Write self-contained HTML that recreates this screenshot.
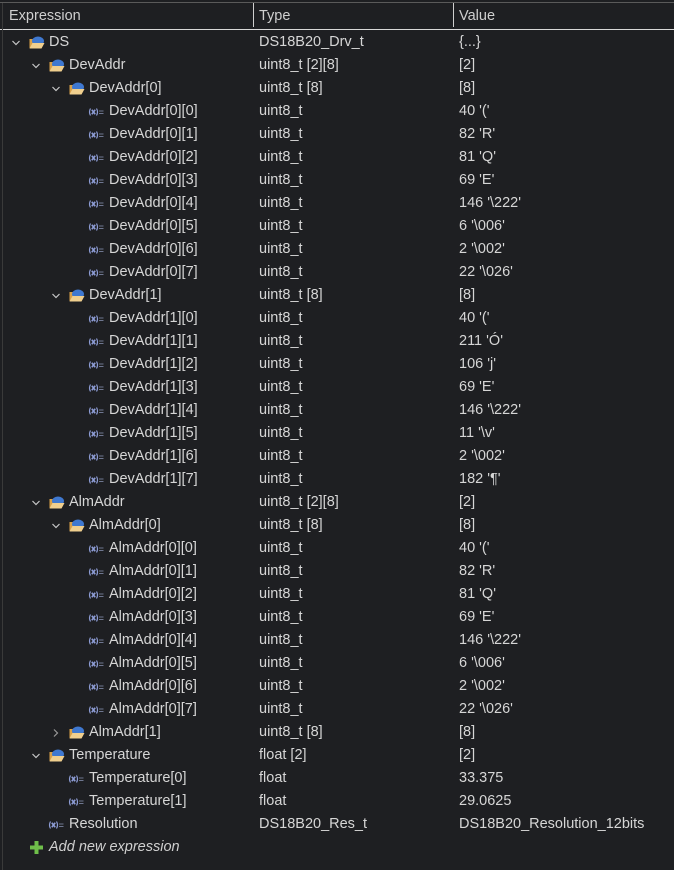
<!DOCTYPE html>
<html><head><meta charset="utf-8"><style>
body{margin:0;width:674px;height:870px;background:#1e1f22;overflow:hidden;font-family:"Liberation Sans",sans-serif;font-size:14.5px;color:#d6d6d6;position:relative}
.hdr{position:absolute;left:0;top:2px;width:674px;height:26px;border-top:1px solid #5a5a5a;border-bottom:1px solid #d8d8d8;background:#1e1f22}
.hdr span{position:absolute;top:5px;color:#cfcfcf}
.sep{position:absolute;top:3px;width:1px;height:24px;background:#cfcfcf}
.r{position:absolute;left:0;width:674px;height:23px;line-height:23px;white-space:nowrap}
.r b{font-weight:normal;position:absolute}
.t{left:259px}.v{left:459px}
.ar{position:absolute;width:10px;height:10px}
.ic{position:absolute;top:5px}
</style></head><body>
<div class="hdr"><span style="left:9px">Expression</span><span style="left:259px">Type</span><span style="left:459px">Value</span></div>
<div class="sep" style="left:253px"></div><div class="sep" style="left:453px"></div>
<div style="position:absolute;left:2px;top:3px;width:1px;height:867px;background:#3a3a3a"></div>
<svg width="0" height="0" style="position:absolute"><defs>
<symbol id="f" viewBox="0 0 16 13"><path d="M0.5 3h5l1 1h5v8h-11z" fill="#d9a048"/><ellipse cx="9" cy="5" rx="6" ry="4.5" fill="#3f78d0"/><path d="M0.5 12.5l3-5.5h12l-3 5.5z" fill="#f0cf8e"/></symbol>
<symbol id="l" viewBox="0 0 16 8"><g stroke="#8e9dd6" stroke-width="1.2" fill="none"><path d="M2.5 0.5q-2 3.5 0 7"/><path d="M8.5 0.5q2 3.5 0 7"/><path d="M3.8 1.8l3.4 4.4M7.2 1.8l-3.4 4.4" stroke-width="1.6"/><path d="M11 3h4.5M11 5.5h4.5" stroke="#6f7790" stroke-width="1"/></g></symbol>
<symbol id="d" viewBox="0 0 10 10"><path d="M1.5 3l3.5 3.5 3.5-3.5" stroke="#c8c8c8" stroke-width="1.2" fill="none"/></symbol>
<symbol id="c" viewBox="0 0 10 10"><path d="M3 1.5l3.5 3.5-3.5 3.5" stroke="#9a9a9a" stroke-width="1.2" fill="none"/></symbol>
</defs></svg>

<div class="r" style="top:31px"><svg class="ar" style="left:11px;top:7px"><use href="#d"/></svg><svg class="ic" style="left:29px" width="16" height="13"><use href="#f"/></svg><b style="left:49px">DS</b><b class="t">DS18B20_Drv_t</b><b class="v">{...}</b></div>
<div class="r" style="top:54px"><svg class="ar" style="left:31px;top:7px"><use href="#d"/></svg><svg class="ic" style="left:49px" width="16" height="13"><use href="#f"/></svg><b style="left:69px">DevAddr</b><b class="t">uint8_t [2][8]</b><b class="v">[2]</b></div>
<div class="r" style="top:77px"><svg class="ar" style="left:51px;top:7px"><use href="#d"/></svg><svg class="ic" style="left:69px" width="16" height="13"><use href="#f"/></svg><b style="left:89px">DevAddr[0]</b><b class="t">uint8_t [8]</b><b class="v">[8]</b></div>
<div class="r" style="top:100px"><svg class="ic" style="left:88px;top:8px" width="16" height="8"><use href="#l"/></svg><b style="left:109px">DevAddr[0][0]</b><b class="t">uint8_t</b><b class="v">40 '('</b></div>
<div class="r" style="top:123px"><svg class="ic" style="left:88px;top:8px" width="16" height="8"><use href="#l"/></svg><b style="left:109px">DevAddr[0][1]</b><b class="t">uint8_t</b><b class="v">82 'R'</b></div>
<div class="r" style="top:146px"><svg class="ic" style="left:88px;top:8px" width="16" height="8"><use href="#l"/></svg><b style="left:109px">DevAddr[0][2]</b><b class="t">uint8_t</b><b class="v">81 'Q'</b></div>
<div class="r" style="top:169px"><svg class="ic" style="left:88px;top:8px" width="16" height="8"><use href="#l"/></svg><b style="left:109px">DevAddr[0][3]</b><b class="t">uint8_t</b><b class="v">69 'E'</b></div>
<div class="r" style="top:192px"><svg class="ic" style="left:88px;top:8px" width="16" height="8"><use href="#l"/></svg><b style="left:109px">DevAddr[0][4]</b><b class="t">uint8_t</b><b class="v">146 '\222'</b></div>
<div class="r" style="top:215px"><svg class="ic" style="left:88px;top:8px" width="16" height="8"><use href="#l"/></svg><b style="left:109px">DevAddr[0][5]</b><b class="t">uint8_t</b><b class="v">6 '\006'</b></div>
<div class="r" style="top:238px"><svg class="ic" style="left:88px;top:8px" width="16" height="8"><use href="#l"/></svg><b style="left:109px">DevAddr[0][6]</b><b class="t">uint8_t</b><b class="v">2 '\002'</b></div>
<div class="r" style="top:261px"><svg class="ic" style="left:88px;top:8px" width="16" height="8"><use href="#l"/></svg><b style="left:109px">DevAddr[0][7]</b><b class="t">uint8_t</b><b class="v">22 '\026'</b></div>
<div class="r" style="top:284px"><svg class="ar" style="left:51px;top:7px"><use href="#d"/></svg><svg class="ic" style="left:69px" width="16" height="13"><use href="#f"/></svg><b style="left:89px">DevAddr[1]</b><b class="t">uint8_t [8]</b><b class="v">[8]</b></div>
<div class="r" style="top:307px"><svg class="ic" style="left:88px;top:8px" width="16" height="8"><use href="#l"/></svg><b style="left:109px">DevAddr[1][0]</b><b class="t">uint8_t</b><b class="v">40 '('</b></div>
<div class="r" style="top:330px"><svg class="ic" style="left:88px;top:8px" width="16" height="8"><use href="#l"/></svg><b style="left:109px">DevAddr[1][1]</b><b class="t">uint8_t</b><b class="v">211 'Ó'</b></div>
<div class="r" style="top:353px"><svg class="ic" style="left:88px;top:8px" width="16" height="8"><use href="#l"/></svg><b style="left:109px">DevAddr[1][2]</b><b class="t">uint8_t</b><b class="v">106 'j'</b></div>
<div class="r" style="top:376px"><svg class="ic" style="left:88px;top:8px" width="16" height="8"><use href="#l"/></svg><b style="left:109px">DevAddr[1][3]</b><b class="t">uint8_t</b><b class="v">69 'E'</b></div>
<div class="r" style="top:399px"><svg class="ic" style="left:88px;top:8px" width="16" height="8"><use href="#l"/></svg><b style="left:109px">DevAddr[1][4]</b><b class="t">uint8_t</b><b class="v">146 '\222'</b></div>
<div class="r" style="top:422px"><svg class="ic" style="left:88px;top:8px" width="16" height="8"><use href="#l"/></svg><b style="left:109px">DevAddr[1][5]</b><b class="t">uint8_t</b><b class="v">11 '\v'</b></div>
<div class="r" style="top:445px"><svg class="ic" style="left:88px;top:8px" width="16" height="8"><use href="#l"/></svg><b style="left:109px">DevAddr[1][6]</b><b class="t">uint8_t</b><b class="v">2 '\002'</b></div>
<div class="r" style="top:468px"><svg class="ic" style="left:88px;top:8px" width="16" height="8"><use href="#l"/></svg><b style="left:109px">DevAddr[1][7]</b><b class="t">uint8_t</b><b class="v">182 '¶'</b></div>
<div class="r" style="top:491px"><svg class="ar" style="left:31px;top:7px"><use href="#d"/></svg><svg class="ic" style="left:49px" width="16" height="13"><use href="#f"/></svg><b style="left:69px">AlmAddr</b><b class="t">uint8_t [2][8]</b><b class="v">[2]</b></div>
<div class="r" style="top:514px"><svg class="ar" style="left:51px;top:7px"><use href="#d"/></svg><svg class="ic" style="left:69px" width="16" height="13"><use href="#f"/></svg><b style="left:89px">AlmAddr[0]</b><b class="t">uint8_t [8]</b><b class="v">[8]</b></div>
<div class="r" style="top:537px"><svg class="ic" style="left:88px;top:8px" width="16" height="8"><use href="#l"/></svg><b style="left:109px">AlmAddr[0][0]</b><b class="t">uint8_t</b><b class="v">40 '('</b></div>
<div class="r" style="top:560px"><svg class="ic" style="left:88px;top:8px" width="16" height="8"><use href="#l"/></svg><b style="left:109px">AlmAddr[0][1]</b><b class="t">uint8_t</b><b class="v">82 'R'</b></div>
<div class="r" style="top:583px"><svg class="ic" style="left:88px;top:8px" width="16" height="8"><use href="#l"/></svg><b style="left:109px">AlmAddr[0][2]</b><b class="t">uint8_t</b><b class="v">81 'Q'</b></div>
<div class="r" style="top:606px"><svg class="ic" style="left:88px;top:8px" width="16" height="8"><use href="#l"/></svg><b style="left:109px">AlmAddr[0][3]</b><b class="t">uint8_t</b><b class="v">69 'E'</b></div>
<div class="r" style="top:629px"><svg class="ic" style="left:88px;top:8px" width="16" height="8"><use href="#l"/></svg><b style="left:109px">AlmAddr[0][4]</b><b class="t">uint8_t</b><b class="v">146 '\222'</b></div>
<div class="r" style="top:652px"><svg class="ic" style="left:88px;top:8px" width="16" height="8"><use href="#l"/></svg><b style="left:109px">AlmAddr[0][5]</b><b class="t">uint8_t</b><b class="v">6 '\006'</b></div>
<div class="r" style="top:675px"><svg class="ic" style="left:88px;top:8px" width="16" height="8"><use href="#l"/></svg><b style="left:109px">AlmAddr[0][6]</b><b class="t">uint8_t</b><b class="v">2 '\002'</b></div>
<div class="r" style="top:698px"><svg class="ic" style="left:88px;top:8px" width="16" height="8"><use href="#l"/></svg><b style="left:109px">AlmAddr[0][7]</b><b class="t">uint8_t</b><b class="v">22 '\026'</b></div>
<div class="r" style="top:721px"><svg class="ar" style="left:51px;top:7px"><use href="#c"/></svg><svg class="ic" style="left:69px" width="16" height="13"><use href="#f"/></svg><b style="left:89px">AlmAddr[1]</b><b class="t">uint8_t [8]</b><b class="v">[8]</b></div>
<div class="r" style="top:744px"><svg class="ar" style="left:31px;top:7px"><use href="#d"/></svg><svg class="ic" style="left:49px" width="16" height="13"><use href="#f"/></svg><b style="left:69px">Temperature</b><b class="t">float [2]</b><b class="v">[2]</b></div>
<div class="r" style="top:767px"><svg class="ic" style="left:68px;top:8px" width="16" height="8"><use href="#l"/></svg><b style="left:89px">Temperature[0]</b><b class="t">float</b><b class="v">33.375</b></div>
<div class="r" style="top:790px"><svg class="ic" style="left:68px;top:8px" width="16" height="8"><use href="#l"/></svg><b style="left:89px">Temperature[1]</b><b class="t">float</b><b class="v">29.0625</b></div>
<div class="r" style="top:813px"><svg class="ic" style="left:48px;top:8px" width="16" height="8"><use href="#l"/></svg><b style="left:69px">Resolution</b><b class="t">DS18B20_Res_t</b><b class="v">DS18B20_Resolution_12bits</b></div>
<div class="r" style="top:836px"><svg class="ic" style="left:30px;top:5px" width="13" height="13" viewBox="0 0 13 13"><path d="M4.5 0h4v4.5H13v4H8.5V13h-4V8.5H0v-4h4.5z" fill="#6fbf4a"/></svg><b style="left:49px;font-style:italic;color:#cfcfcf">Add new expression</b></div>
</body></html>
